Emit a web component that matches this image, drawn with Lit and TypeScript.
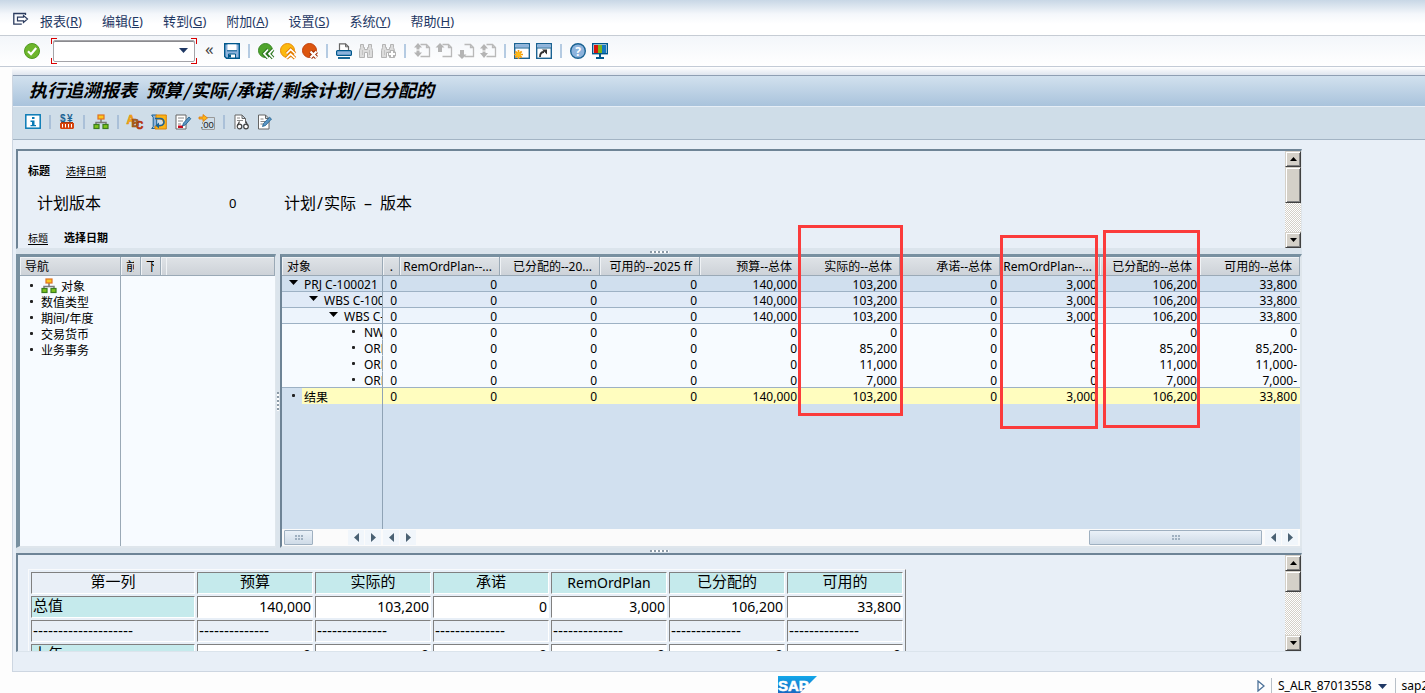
import { LitElement, html, css, svg, nothing } from "lit";
import type { TemplateResult } from "lit";
import { customElement, property } from "lit/decorators.js";
import { classMap } from "lit/directives/class-map.js";

const orgShapes = svg`
  <path d="M8 5v3M3 11V8.500h10V11" fill="none" stroke="#7a7a7a" stroke-width="1.500"/>
  <rect x="5" y="1" width="6" height="4" fill="#fcc81c" stroke="#e07020" stroke-width="1.200"/>
  <rect x="1" y="10.500" width="5" height="4" fill="#7fc31c" stroke="#3a7d1c" stroke-width="1.200"/>
  <rect x="10" y="10.500" width="5" height="4" fill="#7fc31c" stroke="#3a7d1c" stroke-width="1.200"/>`;

const binoculars = svg`
  <path d="M2.500 1.500h3v3h1v2h3v-2h1v-3h3v3l1 3v7h-5v-5h-3v5h-5v-7l1-3z" fill="#dcdcdc" stroke="#b4b4b4"/>
  <path d="M4.500 7v5M11.500 7v5" stroke="#c4c4c4"/>`;

const page = svg`<path d="M6.500 1.500h6l3 3v9h-9M12.500 1.500v3h3" fill="none" stroke="#b9b9b9" stroke-width="1.300"/>`;

const windowFrame = svg`
  <rect x=".7" y=".7" width="14.600" height="14.600" fill="#fff" stroke="#1b6393" stroke-width="1.400"/>
  <rect x="1.400" y="1.400" width="13.200" height="3.200" fill="#8fb4dc"/>
  <path d="M1 5h14" stroke="#1b6393"/>`;

const ICONS: Record<string, TemplateResult> = {
  menu: svg`<path d="M12.500 4V2.500H.8v10.700h8" fill="none" stroke="#2b3b5e" stroke-width="1.300"/><path d="M4.500 6.200h6V4.500l4 3.500-4 3.500V9.800h-6z" fill="#fff" stroke="#2b3b5e" stroke-width="1.200"/>`,
  check: svg`<circle cx="8" cy="8" r="7.500" fill="#6db52c" stroke="#4f9a20"/><path d="M4 8.200l3 3L12.200 5" fill="none" stroke="#fff" stroke-width="2.200"/>`,
  save: svg`<path d="M.7.700h14.600v14.600H2.500L.7 13.500z" fill="#8db3dc" stroke="#00588c" stroke-width="1.400"/><rect x="3.500" y="1.400" width="9" height="6" fill="#fff"/><path d="M3 7.800h10" stroke="#00588c"/><path d="M4.500 15v-4h7v4z" fill="#fff" stroke="#00588c"/><rect x="5" y="11.500" width="2" height="3" fill="#00588c"/>`,
  back: svg`<circle cx="7.500" cy="7.500" r="7" fill="#4fa42c" stroke="#3b8a28"/><path d="M10 6.500L6 10.800l4 4.200M15 6.500l-4 4.300 4 4.200" fill="none" stroke="#2b7420" stroke-width="3.600"/><path d="M10 6.500L6 10.800l4 4.200M15 6.500l-4 4.300 4 4.200" fill="none" stroke="#fff" stroke-width="1.700"/>`,
  exit: svg`<circle cx="7.500" cy="7.500" r="7" fill="#fbb90f" stroke="#ea8a06"/><path d="M6.500 10.500l4.200-4 4.300 4M6.500 15.200l4.200-4 4.300 4" fill="none" stroke="#e47c00" stroke-width="3.600"/><path d="M6.500 10.500l4.200-4 4.300 4M6.500 15.200l4.200-4 4.300 4" fill="none" stroke="#fff" stroke-width="1.700"/>`,
  cancel: svg`<circle cx="7.500" cy="7.500" r="7" fill="#dc560f" stroke="#c2410c"/><path d="M8.500 8.500l6 6M14.500 8.500l-6 6" stroke="#a22f08" stroke-width="4.200"/><path d="M8.500 8.500l6 6M14.500 8.500l-6 6" stroke="#fff" stroke-width="2.200"/>`,
  print: svg`<path d="M3.500 8V.8h6l3 3V8" fill="#fff" stroke="#666" stroke-width="1.200"/><path d="M9.500.8v3h3" fill="none" stroke="#666"/><rect x=".6" y="7.600" width="14.800" height="4.800" rx="1" fill="#8db3dc" stroke="#00588c" stroke-width="1.200"/><path d="M2 15h12" stroke="#00588c" stroke-width="1.800"/>`,
  find: binoculars,
  findNext: svg`${binoculars}<path d="M12 7v8M8 11h8" stroke="#b4b4b4" stroke-width="4.500"/><path d="M12 8v6M9 11h6" stroke="#fff" stroke-width="2"/>`,
  first: svg`${page}<path d="M4 0l4 4.500H5.500v5H8L4 14 0 9.500h2.500v-5H0z" fill="#b4b4b4"/><path d="M1 7h6" stroke="#fff"/>`,
  prev: svg`${page}<path d="M4 0l4.500 4.500H6V9H2V4.500H-.5z" fill="#b4b4b4"/>`,
  next: svg`${page}<path d="M4 16l4.500-4.500H6V7H2v4.500H-.5z" fill="#b4b4b4"/>`,
  last: svg`${page}<path d="M4 1l4 4.500H5.500V10H8l-4 5-4-5h2.500V5.500H0z" fill="#b4b4b4"/><path d="M1 8h6" stroke="#fff"/>`,
  session: svg`${windowFrame}<path d="M4.500 7v9M0 11.500h9M1.300 8.300l6.400 6.400M7.700 8.300l-6.400 6.400" stroke="#f29a0c" stroke-width="1.700"/><circle cx="4.500" cy="11.500" r="2.600" fill="#fbb816"/>`,
  shortcut: svg`${windowFrame}<path d="M4 14c0-3.500 1.500-5 4-5" fill="none" stroke="#333" stroke-width="1.800"/><path d="M6 6.500h5v5z" fill="#333"/>`,
  help: svg`<circle cx="8" cy="8" r="7.300" fill="#8db3dc" stroke="#1b6393" stroke-width="1.400"/><text x="8" y="12.500" text-anchor="middle" font-size="12" font-weight="bold" fill="#fff" font-family="Noto Sans">?</text>`,
  monitor: svg`<rect x=".7" y=".7" width="14.600" height="10" fill="#fff" stroke="#00588c" stroke-width="1.400"/><path d="M2 2h4v8H2z" fill="#d8140a"/><path d="M6 2h4v8H6z" fill="#7ab51c"/><path d="M10 2h4v8h-4z" fill="#1478be"/><path d="M8 11v3M4 15h8" stroke="#00588c" stroke-width="2"/>`,
  info: svg`<rect x=".8" y=".8" width="14.400" height="13.400" fill="#fff" stroke="#0a7bb5" stroke-width="1.500"/><path d="M7 3h2.500v2H7zM5.500 6.500h4V11H11v1.200H5.500V11H7V8H5.500z" fill="#0a7bb5"/>`,
  currency: svg`<text x="1" y="7.500" font-size="10" font-weight="bold" fill="#1b6393" font-family="Liberation Sans">$</text><text x="8" y="7.500" font-size="10" font-weight="bold" fill="#1b6393" font-family="Liberation Sans">¥</text><path d="M1 9h14v5l-1 1H2l-1-1z" fill="#d6430d"/><path d="M3.500 10v3.500M6.500 10v3.500M9.500 10v3.500M12.500 10v3.500" stroke="#fff"/><path d="M2 8.500h12" stroke="#a7380f"/>`,
  org: orgShapes,
  abc: svg`<g font-family="Liberation Sans" font-weight="bold" stroke-width=".6"><text x="-.5" y="10" font-size="12" fill="#fbb416" stroke="#e08a0a">A</text><text x="9" y="15" font-size="10" fill="#c8350c" stroke="#a82a08">C</text><text x="4.500" y="12.500" font-size="10.500" fill="#b5651d" stroke="#8a4510">B</text></g>`,
  refresh: svg`<path d="M.7 1h5v13.500h-5l1.500-2v-9z" fill="#8db3dc" stroke="#1b6393"/><path d="M5 1h10.300v14H4v-3h5a3.300 3.300 0 0 0 0-7H5z" fill="#fbb416" stroke="#d9820a"/><path d="M4 4.500h5.500a3.500 3.500 0 0 1 0 7H7" fill="none" stroke="#1b6393" stroke-width="1.600"/><path d="M8 8.500v6l-3.500-3z" fill="#1b6393"/>`,
  docEdit: svg`<path d="M1 1h10v14H1z" fill="#fff" stroke="#666"/><path d="M3 4h6M3 7h5M3 10h3" stroke="#888"/><path d="M3 11.500h5V14H3z" fill="#c80a1e"/><path d="M7.500 12l1-3 5.500-6 1.800 1.700L10.300 11z" fill="#5b95c4" stroke="#1b5d8a" stroke-width=".8"/>`,
  decimals: svg`<path d="M7 3.500h8.500V15M3.500 8v2M3 15.500h12.500" fill="none" stroke="#999"/><path d="M0 3h4V.5L8.500 4 4 7.500V5H0z" fill="#fbb416" stroke="#e07a0a" stroke-width=".8"/><text x="1.500" y="14" font-size="9.500" fill="#222" font-family="Liberation Sans">,00</text>`,
  docView: svg`<path d="M2 15V1h7l3.500 3.500V9M9 1v3.500h3.500" fill="#fff" stroke="#666"/><path d="M4 4h3M4 6.500h6" stroke="#888"/><g fill="#fff" stroke="#444" stroke-width="1.200"><circle cx="6.500" cy="12.500" r="2.300"/><circle cx="13" cy="12.500" r="2.300"/><path d="M4.500 11.500l2-4M14.500 11.500l-1.500-4" fill="none"/></g>`,
  docPen: svg`<path d="M1.500 15V1h7l3.500 3.500V15zM8.500 1v3.500H12" fill="#fff" stroke="#666"/><path d="M3.500 5h3M3.500 7.500h5M3.500 10h3" stroke="#888"/><path d="M5.500 12.500l1-3 6-6.300 2 1.800-6 6.500z" fill="#5b95c4" stroke="#1b5d8a" stroke-width=".8"/>`,
};

const icon = (name: string) =>
  html`<svg class="icon" viewBox="0 0 16 16" width="16" height="16" aria-hidden="true">${ICONS[name]}</svg>`;

/** Classic raised vertical scroll bar. */
@customElement("pane-scrollbar")
export class PaneScrollbar extends LitElement {
  @property({ type: Number }) thumb = 36;

  static styles = css`
    :host {
      display: flex;
      flex-direction: column;
      width: 16px;
      background-color: #fff;
      background-image: repeating-conic-gradient(#d4d0c8 0 25%, #fff 0 50%);
      background-size: 2px 2px;
    }
    .arrow,
    .thumb {
      box-sizing: border-box;
      width: 16px;
      background: #d4d0c8;
      border: 1px solid;
      border-color: #d4d0c8 #404040 #404040 #d4d0c8;
      box-shadow: inset 1px 1px #fff, inset -1px -1px #808080;
    }
    .arrow {
      height: 16px;
      padding: 0;
      display: grid;
      place-items: center;
    }
    .down {
      margin-top: auto;
    }
  `;

  render() {
    return html`
      <button class="arrow" aria-label="向上滚动">
        <svg width="7" height="4" viewBox="0 0 7 4"><path d="M0 4L3.500 0 7 4z" /></svg>
      </button>
      <div class="thumb" style="height:${this.thumb}px"></div>
      <button class="arrow down" aria-label="向下滚动">
        <svg width="7" height="4" viewBox="0 0 7 4"><path d="M0 0h7L3.500 4z" /></svg>
      </button>
    `;
  }
}

const MENUS: [string, string][] = [
  ["报表", "R"], ["编辑", "E"], ["转到", "G"], ["附加", "A"],
  ["设置", "S"], ["系统", "Y"], ["帮助", "H"],
];

const SYSTEM_TOOLS: [string, string][][] = [
  [["save", "保存"]],
  [["back", "返回"], ["exit", "退出"], ["cancel", "取消"]],
  [["print", "打印"], ["find", "查找"], ["findNext", "查找下一个"]],
  [["first", "第一页"], ["prev", "上一页"], ["next", "下一页"], ["last", "最后一页"]],
  [["session", "新建会话"], ["shortcut", "生成快捷方式"]],
  [["help", "帮助"], ["monitor", "定制本地布局"]],
];

const APP_TOOLS: [string, string][][] = [
  [["info", "信息"]],
  [["currency", "货币"]],
  [["org", "层次"]],
  [["abc", "文本"], ["refresh", "刷新"], ["docEdit", "编辑"], ["decimals", "数字格式"]],
  [["docView", "显示"], ["docPen", "更改"]],
];

const NAV_ITEMS = ["对象", "数值类型", "期间/年度", "交易货币", "业务事务"];

const COLUMNS = [
  ".", "RemOrdPlan--...", "已分配的--20...", "可用的--2025 ff", "预算--总体",
  "实际的--总体", "承诺--总体", "RemOrdPlan--...", "已分配的--总体", "可用的--总体",
];

interface Row {
  label: string;
  level: number;
  kind: string;
  leaf?: boolean;
  values: string[];
}

const totals = ["140,000", "103,200", "0", "3,000", "106,200", "33,800"];
const ROWS: Row[] = [
  { label: "PRJ C-100021", level: 0, kind: "l0", values: totals },
  { label: "WBS C-100", level: 1, kind: "l1", values: totals },
  { label: "WBS C-", level: 2, kind: "l2", values: totals },
  { label: "NW", level: 3, kind: "l3", leaf: true, values: ["0", "0", "0", "0", "0", "0"] },
  { label: "ORD", level: 3, kind: "l3", leaf: true, values: ["0", "85,200", "0", "0", "85,200", "85,200-"] },
  { label: "ORD", level: 3, kind: "l3", leaf: true, values: ["0", "11,000", "0", "0", "11,000", "11,000-"] },
  { label: "ORD", level: 3, kind: "l3 end", leaf: true, values: ["0", "7,000", "0", "0", "7,000", "7,000-"] },
  { label: "结果", level: 0, kind: "sum", leaf: true, values: totals },
];

const SUMMARY_HEAD = ["第一列", "预算", "实际的", "承诺", "RemOrdPlan", "已分配的", "可用的"];

@customElement("app-root")
export class AppRoot extends LitElement {
  static styles = css`
    :host {
      display: flex;
      flex-direction: column;
      min-height: 100vh;
      overflow: hidden;
      background: #fdfdfd;
      color: #000;
      font: 12px/16px "Noto Sans", "Noto Sans CJK SC", sans-serif;
    }
    button {
      margin: 0;
      padding: 0;
      border: 0;
      background: none;
      color: inherit;
      font: inherit;
    }
    .icon {
      display: block;
      overflow: visible;
    }
    .menubar {
      display: flex;
      align-items: center;
      gap: 20px;
      height: 36px;
      box-sizing: border-box;
      padding: 6px 13px 0;
      border-bottom: 1px solid #c6ccd4;
      background: linear-gradient(#c8d7e6, #f4f7fb 14px, #fff 24px);
      color: #1f3864;
      font-size: 13px;
    }
    .menubar .launcher {
      margin: -4px -9px 0 0;
    }
    .tools {
      display: flex;
      align-items: center;
      gap: 6px;
    }
    .system {
      height: 31px;
      box-sizing: border-box;
      padding: 0 24px 1px;
      border-bottom: 1px solid #c3cbd6;
      background: linear-gradient(#f3f6fa, #fff);
    }
    .sep {
      width: 2px;
      height: 14px;
      margin: 0 2px;
      background: #b5cbe2;
    }
    .command {
      --r: linear-gradient(#d90000, #d90000);
      display: flex;
      margin: 0 0 0 5px;
      padding: 2px;
      background: var(--r) 0 0/6px 1px, var(--r) 0 0/1px 6px,
        var(--r) 100% 0/6px 1px, var(--r) 100% 0/1px 6px,
        var(--r) 0 100%/6px 1px, var(--r) 0 100%/1px 6px,
        var(--r) 100% 100%/6px 1px, var(--r) 100% 100%/1px 6px;
      background-repeat: no-repeat;
    }
    .field {
      display: flex;
      align-items: center;
      width: 142px;
      height: 22px;
      box-sizing: border-box;
      border: 1px solid #a4a4a8;
      border-radius: 2px;
      background: #fff;
      box-shadow: inset 0 1px #8a8a8e;
    }
    .field input {
      flex: 1;
      min-width: 0;
      border: 0;
      outline: 0;
      background: none;
      font: inherit;
    }
    .field button {
      padding: 0 6px;
    }
    .chevrons {
      margin: -3px 4px 0 2px;
      color: #444;
      font-size: 17px;
    }
    .stage {
      flex: 1;
      display: flex;
      flex-direction: column;
      margin-left: 12px;
      padding-top: 8px;
      background: linear-gradient(#fff, #dfe5ee 8px, #fff 9px);
    }
    .window {
      flex: 1;
      display: flex;
      flex-direction: column;
      border: solid #cdd6e1;
      border-width: 0 0 1px 1px;
      background: #e8eff7;
    }
    h1 {
      height: 30px;
      margin: 0;
      padding: 0 0 0 16px;
      border-top: 1px solid #8f9fb3;
      border-bottom: 1px solid #e6eef6;
      background: linear-gradient(#d2e1ee, #a9c3dc);
      font: italic bold 18px/26px "Noto Sans CJK SC", sans-serif;
    }
    .half {
      display: inline-block;
      width: 0.5em;
      text-align: center;
    }
    .dash {
      display: inline-block;
      width: 1.5em;
      text-align: center;
    }
    .application {
      gap: 8px;
      height: 33px;
      box-sizing: border-box;
      padding: 0 12px 3px;
      border-bottom: 1px solid #a3b4c4;
      background: #cfdde8;
    }
    .application .sep {
      margin: 0;
      background: #aac0d8;
    }
    .work {
      flex: 1;
      display: flex;
      flex-direction: column;
      padding: 9px 123px 19px 3px;
    }
    .pane {
      display: flex;
      box-sizing: border-box;
      border: solid #6e8496;
      border-width: 2px 0 0 2px;
      border-bottom: 1px solid #dbe4ec;
      border-right: 1px solid #dfe5ea;
      background: #e8eff7;
      overflow: hidden;
    }
    .scrollable {
      flex: 1;
      min-width: 0;
    }
    .splitter {
      display: grid;
      place-items: center;
      background: #dbe4ec;
    }
    .splitter.h {
      height: 5px;
    }
    .dots {
      width: 19px;
      height: 2px;
      background: repeating-linear-gradient(90deg, #8c9aa6 0 2px, #fff 2px 4px);
    }
    .splitter.v {
      width: 4px;
    }
    .splitter.v .dots {
      width: 2px;
      height: 19px;
      background: repeating-linear-gradient(#8c9aa6 0 2px, #fff 2px 4px);
    }
    .top {
      height: 100px;
    }
    .tabs {
      display: flex;
      gap: 16px;
      padding: 12px 10px 0;
      font-size: 11px;
    }
    .tabs a {
      color: #000;
      font-size: 10px;
      text-underline-offset: 2px;
    }
    .version {
      display: grid;
      grid-template-columns: 192px 55px auto;
      margin: 12px 0 3px;
      padding-left: 19px;
      font-size: 16px;
      line-height: 24px;
    }
    .version .code {
      font-size: 13px;
    }
    .middle {
      flex: 1;
      display: flex;
      min-height: 294px;
    }
    .nav,
    .grid {
      box-sizing: border-box;
      display: flex;
      flex-direction: column;
      border-top: 3px solid #7890a0;
      border-bottom: 2px solid #dfe6ec;
      border-right: 1px solid #dfe6ec;
    }
    .nav {
      width: 260px;
      border-left: 4px solid #7890a0;
      background: #f7fbff;
    }
    .nav-head,
    .nav-body {
      display: grid;
      grid-template-columns: 101px 20px 20px 5px 1fr;
    }
    .nav-head span,
    th.col {
      box-sizing: border-box;
      height: 19px;
      border: solid #9aa9b6;
      border-width: 0 1px 1px 0;
      background: linear-gradient(#dfe3e7, #cdd2d8);
      box-shadow: inset 1px 1px #eff2f5;
      font-weight: normal;
      line-height: 16px;
      white-space: nowrap;
      overflow: hidden;
    }
    .nav-head span {
      padding: 2px 0 0 5px;
    }
    .clip i {
      display: block;
      width: 8px;
      overflow: hidden;
      font-style: normal;
    }
    .nav-body {
      flex: 1;
    }
    .nav ul {
      margin: 0;
      padding: 3px 0 0;
      border-right: 1px solid #9aa9b6;
      list-style: none;
    }
    .nav li {
      display: flex;
      height: 16px;
      align-items: center;
    }
    .nav li .icon {
      margin: -2px 4px 0 0;
    }
    .dot {
      width: 3px;
      height: 3px;
      border-radius: 1px;
      background: #222;
    }
    .nav .dot {
      margin: 0 8px 3px 10px;
    }
    .grid {
      flex: 1;
      min-width: 0;
      position: relative;
      border-left: 2px solid #6e8496;
      border-right-width: 2px;
      background: #d1e0ef;
    }
    .report {
      width: 100%;
      table-layout: fixed;
      border-collapse: separate;
      border-spacing: 0;
    }
    .report .first {
      width: 101px;
    }
    .report .narrow {
      width: 17px;
    }
    th.col {
      padding: 2px 7px 0 2px;
      text-align: right;
    }
    th.col.lead {
      padding-left: 5px;
      text-align: left;
    }
    th.col.tiny {
      padding: 2px 6px 0 0;
    }
    .report td {
      height: 13px;
      padding: 2px 3px 0 0;
      border-bottom: 1px solid #9db1c4;
      text-align: right;
      line-height: 13px;
      white-space: nowrap;
    }
    .report td.key {
      padding: 0;
      border-right: 1px solid #8fa3b5;
      text-align: left;
    }
    .l0 td { background: #d0dfee; }
    .l1 td { background: #e0eaf7; }
    .l2 td { background: #edf4fc; }
    .l3 td { background: #f7fbff; }
    .l3:not(.end) td { border-bottom-color: #f7fbff; }
    .sum td { background: #fffdbf; border-bottom-color: #fffdbf; }
    .report .sum td.key {
      background: linear-gradient(90deg, #d1e0ef 20px, #fffdbf 20px);
      border-bottom: 0;
    }
    .node {
      display: flex;
      align-items: center;
      box-sizing: border-box;
      height: 15px;
      padding-top: 2px;
      overflow: hidden;
    }
    .sum .node {
      height: 16px;
    }
    .mark {
      flex: none;
      display: flex;
      width: 15px;
      padding-bottom: 4px;
    }
    .mark .dot {
      margin: 1px 0 0 3px;
    }
    .rest {
      flex: 1;
      width: 101px;
      box-sizing: border-box;
      border-right: 1px solid #8fa3b5;
    }
    .bars {
      display: grid;
      grid-template-columns: 101px 1fr;
      background: #fbfbfb;
    }
    .bar {
      display: flex;
      align-items: center;
      height: 17px;
      gap: 1px;
      padding: 0 2px 0 0;
    }
    .bar button {
      display: grid;
      place-items: center;
      width: 16px;
      height: 15px;
      background: #f1f6fb;
    }
    .bar .handle {
      display: grid;
      place-items: center;
      box-sizing: border-box;
      height: 15px;
      border: 1px solid #9fb0c0;
      border-radius: 1px;
      background: linear-gradient(#eaf1f8, #cfdbe7);
    }
    .handle.short {
      width: 29px;
      margin-right: auto;
      margin-left: 2px;
    }
    .handle.long {
      width: 173px;
      margin-left: auto;
      margin-right: 2px;
    }
    .grip {
      width: 8px;
      height: 5px;
      background:
        repeating-linear-gradient(90deg, #9fb0c0 0 2px, transparent 2px 3px) 0 0/8px 2px no-repeat,
        repeating-linear-gradient(90deg, #9fb0c0 0 2px, transparent 2px 3px) 0 3px/8px 2px no-repeat;
    }
    /* Highlight frames laid over the report columns. */
    .frame {
      position: absolute;
      box-sizing: border-box;
      border: 3px solid #fb3b3b;
      pointer-events: none;
    }
    .f1 { right: 397px; top: -32px; width: 105px; height: 191px; }
    .f2 { right: 202px; top: -22px; width: 98px; height: 194px; }
    .f3 { right: 100px; top: -27px; width: 97px; height: 198px; }
    .bottom {
      height: 99px;
    }
    .summary {
      margin: 14px 0 0 10px;
      table-layout: fixed;
      width: 878px;
      border: 1px solid #f8fafc;
      border-right-color: #808080;
      border-spacing: 2px;
      font-size: 15px;
    }
    .summary th,
    .summary td {
      box-sizing: border-box;
      width: 116px;
      height: 22px;
      padding: 0 1px;
      border: 1px solid;
      border-color: #808080 #fff #fff #808080;
      font-weight: normal;
      line-height: 20px;
      text-align: right;
      white-space: nowrap;
      overflow: hidden;
    }
    .summary th {
      line-height: 16px;
      vertical-align: top;
    }
    .summary thead th {
      background: #c5eaec;
      text-align: center;
    }
    .summary thead th:first-child {
      width: 164px;
      background: #e9eff7;
    }
    .summary tbody th {
      background: #c5eaec;
      text-align: left;
    }
    .summary td {
      background: #fff;
    }
    .summary .num {
      font-size: 14px;
      line-height: 20px;
    }
    .summary .rule td {
      background: #e8eff7;
      text-align: left;
      font-family: "Liberation Sans", sans-serif;
    }
    .status {
      display: grid;
      grid-template-columns: 1fr auto;
      height: 21px;
      box-sizing: border-box;
      padding-top: 4px;
      overflow: hidden;
    }
    .logo {
      justify-self: end;
      overflow: visible;
    }
    .session {
      display: flex;
      align-items: center;
      gap: 6px;
      width: 168px;
      height: 20px;
      margin-left: 440px;
      white-space: nowrap;
    }
    .session .bar-line {
      flex: none;
      width: 1px;
      height: 16px;
      background: #b8c0c8;
    }
    .session svg {
      flex: none;
    }
    .session button {
      display: flex;
      align-items: center;
      gap: 6px;
    }
    .session .bar-line + button {
      padding-right: 2px;
    }
  `;

  private tools(groups: [string, string][][]) {
    return groups.map(
      (group, i) => html`
        ${i ? html`<span class="sep"></span>` : nothing}
        ${group.map(([name, label]) => html`<button aria-label=${label}>${icon(name)}</button>`)}
      `
    );
  }

  private arrow(left: boolean) {
    return html`<button aria-label=${left ? "向左滚动" : "向右滚动"}>
      <svg width="5" height="9" viewBox="0 0 5 9"><path d=${left ? "M5 0v9L0 4.500z" : "M0 0v9l5-4.500z"} fill="#4a6173" /></svg>
    </button>`;
  }

  private row(r: Row) {
    return html`<tr class=${r.kind}>
      <td class="key">
        <div class="node" style="padding-left:${7 + r.level * 20}px">
          <span class="mark">${r.leaf
            ? html`<span class="dot"></span>`
            : html`<svg width="9" height="5" viewBox="0 0 9 5"><path d="M0 0h9L4.500 5z" /></svg>`}</span>
          <span>${r.label}</span>
        </div>
      </td>
      ${["0", "0", "0", "0", ...r.values].map((v) => html`<td>${v}</td>`)}
    </tr>`;
  }

  render() {
    const slash = html`<span class="half">/</span>`;
    return html`
      <nav class="menubar">
        <button class="launcher" aria-label="菜单">${icon("menu")}</button>
        ${MENUS.map(([name, key]) => html`<button>${name}(<u>${key}</u>)</button>`)}
      </nav>
      <div class="tools system">
        <button aria-label="输入">${icon("check")}</button>
        <div class="command">
          <div class="field">
            <input aria-label="命令" />
            <button aria-label="命令历史">
              <svg class="icon" width="9" height="5" viewBox="0 0 9 5"><path d="M0 0h9L4.500 5z" fill="#1f3864" /></svg>
            </button>
          </div>
        </div>
        <button class="chevrons">«</button>
        ${this.tools(SYSTEM_TOOLS)}
      </div>
      <main class="stage">
        <div class="window">
          <h1>执行追溯报表<span class="half">&nbsp;</span>预算${slash}实际${slash}承诺${slash}剩余计划${slash}已分配的</h1>
          <div class="tools application">${this.tools(APP_TOOLS)}</div>
          <div class="work">
            <section class="pane top">
              <div class="scrollable">
                <div class="tabs"><b>标题</b><a href="#date">选择日期</a></div>
                <div class="version">
                  <span>计划版本</span>
                  <span class="code">0</span>
                  <span>计划${slash}实际<span class="dash">–</span>版本</span>
                </div>
                <div class="tabs"><a href="#title">标题</a><b>选择日期</b></div>
              </div>
              <pane-scrollbar .thumb=${36}></pane-scrollbar>
            </section>
            <div class="splitter h"><span class="dots"></span></div>
            <div class="middle">
              <section class="nav">
                <div class="nav-head">
                  <span>导航</span><span class="clip"><i>前</i></span><span class="clip"><i>下</i></span><span></span><span></span>
                </div>
                <div class="nav-body">
                  <ul>
                    ${NAV_ITEMS.map(
                      (t, i) => html`<li><span class="dot"></span>${i ? nothing : icon("org")}<span>${t}</span></li>`
                    )}
                  </ul>
                </div>
              </section>
              <div class="splitter v"><span class="dots"></span></div>
              <section class="grid">
                <table class="report">
                  <thead>
                    <tr>
                      <th class="col lead first">对象</th>
                      ${COLUMNS.map(
                        (c, i) => html`<th class=${classMap({ col: true, narrow: i === 0, tiny: i === 0 })}>${c}</th>`
                      )}
                    </tr>
                  </thead>
                  <tbody>${ROWS.map((r) => this.row(r))}</tbody>
                </table>
                <div class="rest"></div>
                <div class="bars">
                  <div class="bar">
                    <div class="handle short"><span class="grip"></span></div>
                    ${this.arrow(true)}${this.arrow(false)}
                  </div>
                  <div class="bar">
                    ${this.arrow(true)}${this.arrow(false)}
                    <div class="handle long"><span class="grip"></span></div>
                    ${this.arrow(true)}${this.arrow(false)}
                  </div>
                </div>
                <div class="frame f1"></div>
                <div class="frame f2"></div>
                <div class="frame f3"></div>
              </section>
            </div>
            <div class="splitter h"><span class="dots"></span></div>
            <section class="pane bottom">
              <div class="scrollable">
                <table class="summary">
                  <thead>
                    <tr>${SUMMARY_HEAD.map((h) => html`<th class=${h === "RemOrdPlan" ? "num" : ""}>${h}</th>`)}</tr>
                  </thead>
                  <tbody>
                    <tr><th>总值</th>${totals.map((v) => html`<td class="num">${v}</td>`)}</tr>
                    <tr class="rule"><td>${"-".repeat(20)}</td>${totals.map(() => html`<td>${"-".repeat(14)}</td>`)}</tr>
                    <tr><th>上年</th>${totals.map(() => html`<td class="num">0</td>`)}</tr>
                  </tbody>
                </table>
              </div>
              <pane-scrollbar .thumb=${21}></pane-scrollbar>
            </section>
          </div>
        </div>
      </main>
      <footer class="status">
        <svg class="logo" width="39" height="19" viewBox="0 0 39 19" role="img" aria-label="SAP">
          <defs><linearGradient id="g" x2="0" y2="1"><stop stop-color="#12a8ea" /><stop offset="1" stop-color="#1a62bd" /></linearGradient></defs>
          <path d="M0 0h39L20 19H0z" fill="url(#g)" />
          <text x="0" y="15" font-family="Liberation Sans" font-weight="bold" font-size="15" fill="#fff" stroke="#fff" stroke-width=".6">SAP</text>
        </svg>
        <div class="session">
          <svg width="8" height="12" viewBox="0 0 8 12"><path d="M1 1l6 5-6 5z" fill="#fff" stroke="#4d7299" stroke-width="1.300" /></svg>
          <span class="bar-line"></span>
          <button>S_ALR_87013558
            <svg width="9" height="5" viewBox="0 0 9 5"><path d="M0 0h9L4.500 5z" fill="#1f3864" /></svg>
          </button>
          <span class="bar-line"></span>
          <span>sap2</span>
        </div>
      </footer>
    `;
  }
}
